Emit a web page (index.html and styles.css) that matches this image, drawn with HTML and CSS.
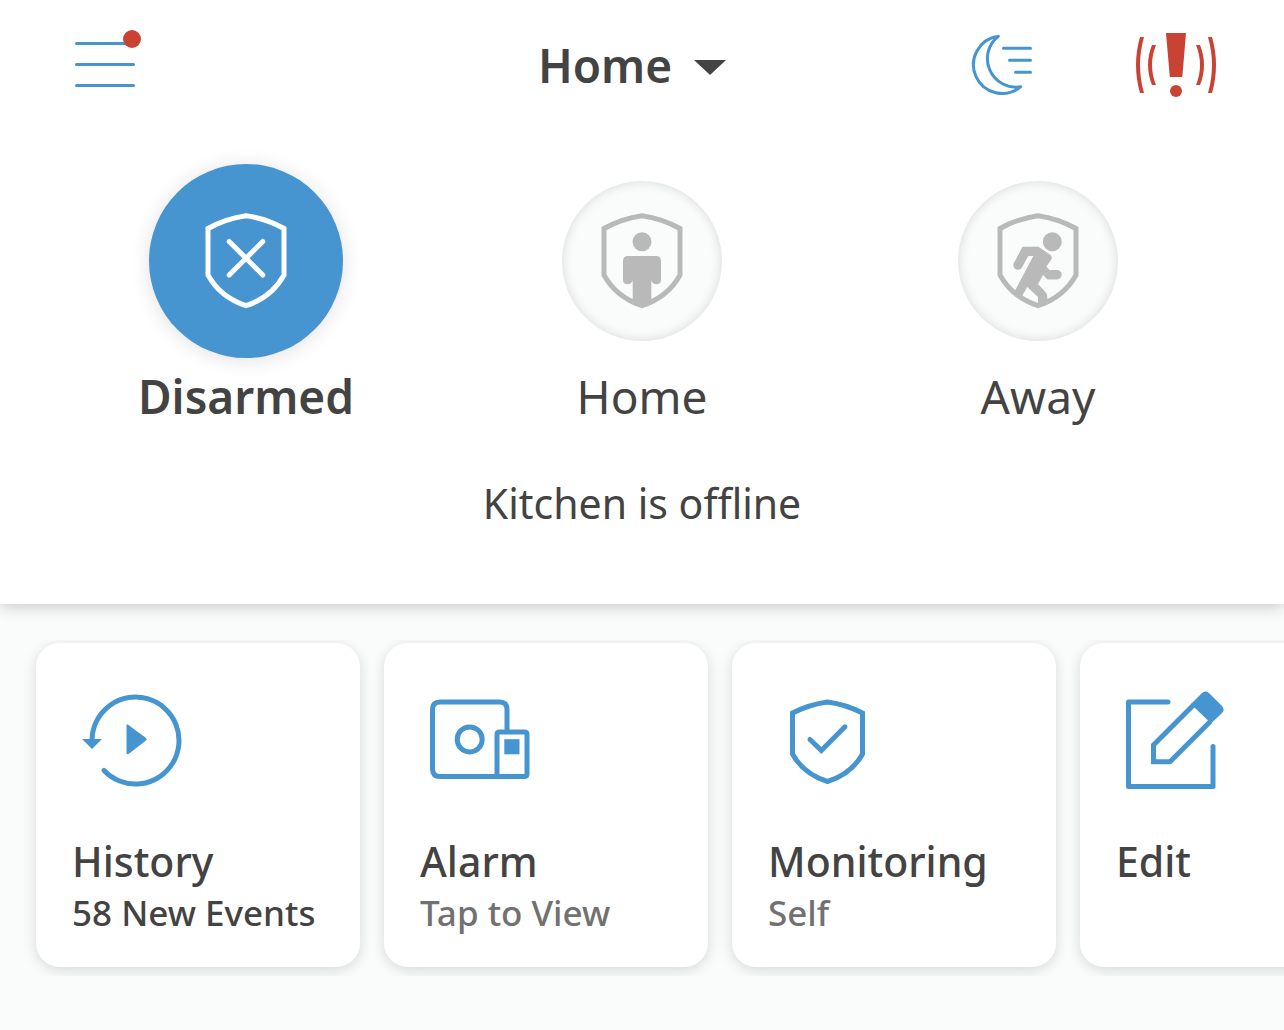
FILE: index.html
```html
<!DOCTYPE html>
<html lang="en">
  <head>
    <meta charset="utf-8">
    <meta name="viewport" content="width=device-width, initial-scale=1">
    <title>Home</title>
    <link rel="stylesheet" href="styles.css">
  </head>
  <body>
    <header class="panel">
      <div class="topbar">
        <button class="menu" aria-label="Menu">
          <svg width="68" height="64" viewBox="0 0 68 64">
            <path class="line thin" d="M1.5 10.5H58.5M1.5 31.5H58.5M1.5 52.5H58.5" />
            <circle class="red" cx="57" cy="6" r="9" />
          </svg>
        </button>

        <button class="location">
          Home
          <svg width="32" height="20" viewBox="0 0 32 20">
            <path fill="currentColor" d="M0 5H32L16 20Z" />
          </svg>
        </button>

        <div class="actions">
          <button aria-label="Modes">
            <svg width="66" height="64" viewBox="0 0 66 64">
              <path class="line thin" d="M29.3 3.2A28.75 28.75 0 1 0 51.7 53.7A28.5 28.5 0 0 1 29.3 3.2Z" />
              <path class="line thin" d="M34.5 15.3H61.5M40.5 27.3H61.5M46.5 39.3H61.5" />
            </svg>
          </button>
          <button aria-label="Panic">
            <svg width="80" height="64" viewBox="0 0 80 64">
              <path class="red" d="M30 0H50L46.3 44H33.8Z" />
              <circle class="red" cx="40" cy="58" r="6" />
              <path class="red" d="M4 4H8Q0 32 8 60H4Q-4 32 4 4ZM16 12H20Q12 32 20 52H16Q8 32 16 12Z" />
              <path class="red" d="M76 4H72Q80 32 72 60H76Q84 32 76 4ZM64 12H60Q68 32 60 52H64Q72 32 64 12Z" />
            </svg>
          </button>
        </div>
      </div>

      <div class="modes">
        <button class="mode active">
          <span class="dial">
            <span class="circle">
              <svg width="96" height="96" viewBox="0 0 96 96">
                <path class="outline" d="M48 2.7Q68 5.5 86 15.5V62Q74 84 48 92.7Q22 84 10 62V15.5Q28 5.5 48 2.7Z" />
                <path class="outline" d="M31.2 28.5L64.8 62.1M64.8 28.5L31.2 62.1" />
              </svg>
            </span>
          </span>
          <span class="name">Disarmed</span>
        </button>

        <button class="mode">
          <span class="dial">
            <span class="circle">
              <svg width="96" height="96" viewBox="0 0 96 96">
                <path class="outline" d="M48 2.7Q68 5.5 86 15.5V62Q74 84 48 92.7Q22 84 10 62V15.5Q28 5.5 48 2.7Z" />
                <circle fill="currentColor" cx="48" cy="28.7" r="9.5" />
                <path fill="currentColor" d="M34 43H62Q67 43 67 48V66.5Q67 71.3 62.5 71.3Q58.5 71.3 57.3 67V89L48 93L38.7 89V67Q37.5 71.3 33.5 71.3Q29 71.3 29 66.5V48Q29 43 34 43Z" />
              </svg>
            </span>
          </span>
          <span class="name">Home</span>
        </button>

        <button class="mode">
          <span class="dial">
            <span class="circle">
              <svg width="96" height="96" viewBox="0 0 96 96">
                <path class="outline" d="M48 2.7Q68 5.5 86 15.5V62Q74 84 48 92.7Q22 84 10 62V15.5Q28 5.5 48 2.7Z" />
                <circle fill="currentColor" cx="62.3" cy="28.7" r="9.5" />
                <path fill="currentColor" d="M32.5 33.7H48.5L60 41.5Q63 44 61 47L56.3 53.5L59.5 57H67A4.7 4.7 0 0 1 67 66.4H57.5L53 62L48 71.3L55.5 79Q57.3 81 57.3 83.5V88.5L48 93V84L37.3 74L32 83L24.5 78.5L43.3 43H38.3L32 54.5A4.6 4.6 0 0 1 24 49.8Z" />
              </svg>
            </span>
          </span>
          <span class="name">Away</span>
        </button>
      </div>

      <p class="status">Kitchen is offline</p>
    </header>

    <main class="cards">
      <button class="card">
        <svg width="120" height="120" viewBox="2 0 120 120">
          <path class="line" d="M22 60A43.5 43.5 0 1 1 34 90.5" stroke-linecap="round" />
          <path class="blue" d="M12 59H32L22 69Z" />
          <path class="blue" d="M56.5 45.5Q56.5 43.5 58.5 45L76 58Q77.5 59.3 76 60.5L58.5 74Q56.5 75 56.5 73Z" />
        </svg>
        <span class="title">History</span>
        <span class="detail new">58 New Events</span>
      </button>

      <button class="card">
        <svg width="120" height="120" viewBox="2 0 120 120">
          <path class="line" d="M89 52V29.5Q89 22 81.5 22H22Q14.5 22 14.5 29.5V89Q14.5 96.5 22 96.5H106.5Q109 96.5 109 94V54.5Q109 52 106.5 52H81.5Q79 52 79 54.5V96.5" />
          <circle class="line" cx="51.7" cy="59.4" r="12.5" />
          <path class="blue" d="M86.3 59.2H101.5V74.3H86.3Z" />
        </svg>
        <span class="title">Alarm</span>
        <span class="detail">Tap to View</span>
      </button>

      <button class="card">
        <svg width="120" height="120" viewBox="2 0 120 120">
          <path class="line" d="M61.5 22Q80 24.5 96.5 33V74Q85.5 94 61.5 101.5Q37.5 94 26.5 74V33Q43 24.5 61.5 22Z" />
          <path class="line" stroke-linecap="round" d="M44 59.5L55.3 70.5L79 46.8" />
        </svg>
        <span class="title">Monitoring</span>
        <span class="detail">Self</span>
      </button>

      <button class="card">
        <svg width="120" height="120" viewBox="2 0 120 120">
          <path class="line" stroke-linecap="round" stroke-linejoin="round" d="M54 22H14.5V106.5H99V66.5" />
          <path class="line" d="M80 24.5L39.5 65V81.7H56L96.5 41.2" />
          <path class="blue" d="M77.5 23.5L87.5 13.5Q91.5 9.7 95.5 13.5L107.5 25.5Q111.5 29.5 107.5 33.5L97.5 43L93.5 40L80.5 27.5Z" />
        </svg>
        <span class="title">Edit</span>
      </button>
    </main>
  </body>
</html>
```
FILE: styles.css
```css
* {
  box-sizing: border-box;
}

body {
  margin: 0;
  min-height: 100vh;
  background-color: #fafcfb;
  color: #434343;
  font-family: "Noto Sans", "Open Sans", sans-serif;
}

button {
  padding: 0;
  border: none;
  background: none;
  color: inherit;
  font: inherit;
  cursor: pointer;
}

svg {
  display: block;
  flex: none;
  overflow: visible;
}

/* Icon colours */
.line {
  fill: none;
  stroke: #4695d0;
  stroke-width: 5px;
}

.thin {
  stroke-width: 3px;
  stroke-linecap: round;
  stroke-linejoin: round;
}

.blue {
  fill: #4695d0;
}

.red {
  fill: #c94335;
}

.outline {
  fill: none;
  stroke: currentColor;
  stroke-width: 5px;
  stroke-linecap: round;
}

/* Top panel */
.panel {
  padding: 33px 0 73px;
  background-color: #fff;
  box-shadow: 0 2px 16px rgba(0, 0, 0, 0.22);
}

.topbar {
  display: grid;
  grid-template-columns: 1fr auto 1fr;
  align-items: center;
  padding: 0 68px;
}

.menu {
  justify-self: start;
  padding-left: 7px;
}

.location {
  display: flex;
  align-items: center;
  gap: 22px;
  padding-right: 20px;
  font-size: 46px;
  font-weight: 600;
  line-height: 64px;
}

.actions {
  display: flex;
  justify-self: end;
  gap: 101px;
}

.modes {
  display: grid;
  grid-template-columns: repeat(3, 1fr);
  margin-top: 67px;
  padding: 0 48px;
}

.mode {
  display: flex;
  flex-direction: column;
  align-items: center;
  gap: 10px;
}

.dial {
  display: flex;
  align-items: center;
  height: 194px;
}

.circle {
  display: flex;
  align-items: center;
  justify-content: center;
  width: 160px;
  height: 160px;
  border-radius: 50%;
  background-color: #fafcfb;
  box-shadow: inset 0 0 12px rgba(0, 0, 0, 0.14);
  color: #b9b9b9;
}

.name {
  font-size: 46px;
  line-height: 56px;
}

.active .circle {
  width: 194px;
  height: 194px;
  background-color: #4695d0;
  box-shadow: 0 2px 20px rgba(0, 0, 0, 0.12);
  color: #fff;
}

.active .name {
  font-weight: 600;
}

.status {
  margin: 51px 0 0;
  font-size: 41px;
  line-height: 56px;
  text-align: center;
}

/* Shortcut cards, the row runs off the right edge */
.cards {
  display: flex;
  gap: 24px;
  margin-top: 36px;
  padding: 3px 36px 9px;
  overflow: hidden;
}

.card {
  display: flex;
  flex: none;
  flex-direction: column;
  align-items: flex-start;
  width: 324px;
  height: 324px;
  padding: 37px 0 0 36px;
  border-radius: 24px;
  background-color: #fff;
  box-shadow: 0 3px 14px rgba(0, 0, 0, 0.14);
  text-align: left;
  white-space: nowrap;
}

.title {
  margin-top: 36px;
  font-size: 41px;
  font-weight: 550;
  line-height: 50px;
}

.detail {
  margin-top: 2px;
  color: #717171;
  font-size: 35px;
  font-weight: 550;
  line-height: 50px;
}

.new {
  color: #434343;
}
```
